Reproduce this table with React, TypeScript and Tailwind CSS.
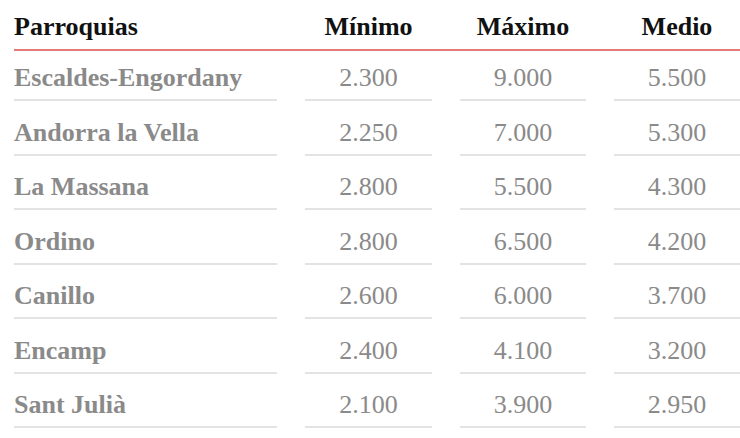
import React from "react";

const rows: [string, string, string, string][] = [
  ["Escaldes-Engordany", "2.300", "9.000", "5.500"],
  ["Andorra la Vella", "2.250", "7.000", "5.300"],
  ["La Massana", "2.800", "5.500", "4.300"],
  ["Ordino", "2.800", "6.500", "4.200"],
  ["Canillo", "2.600", "6.000", "3.700"],
  ["Encamp", "2.400", "4.100", "3.200"],
  ["Sant Julià", "2.100", "3.900", "2.950"],
];

export default function App() {
  return (
    <div
      className="w-[740px] h-[438px] bg-white overflow-hidden pl-[14px]"
      style={{ fontFamily: '"Liberation Serif", "Times New Roman", serif' }}
    >
      <div className="grid grid-cols-[263px_127px_126px_126px] gap-x-[28px] border-b-2 border-[#e47a7a] h-[51px]">
        <div className="flex items-center text-[26px] font-bold text-[#111] pt-[4px]">Parroquias</div>
        <div className="flex items-center justify-center text-[26px] font-bold text-[#111] pt-[4px]">Mínimo</div>
        <div className="flex items-center justify-center text-[26px] font-bold text-[#111] pt-[4px]">Máximo</div>
        <div className="flex items-center justify-center text-[26px] font-bold text-[#111] pt-[4px]">Medio</div>
      </div>
      {rows.map((r, i) => {
        const h = i === 0 ? "h-[50px]" : "h-[54.5px]";
        return (
          <div key={r[0]} className={`grid grid-cols-[263px_127px_126px_126px] gap-x-[28px] ${h}`}>
            <div className="flex items-end pb-[2px] border-b-2 border-[#e3e3e3] text-[26px] font-bold text-[#8a8a8a]">
              {r[0]}
            </div>
            <div className="flex items-end pb-[2px] justify-center border-b-2 border-[#e3e3e3] text-[26px] text-[#8a8a8a]">
              {r[1]}
            </div>
            <div className="flex items-end pb-[2px] justify-center border-b-2 border-[#e3e3e3] text-[26px] text-[#8a8a8a]">
              {r[2]}
            </div>
            <div className="flex items-end pb-[2px] justify-center border-b-2 border-[#e3e3e3] text-[26px] text-[#8a8a8a]">
              {r[3]}
            </div>
          </div>
        );
      })}
    </div>
  );
}
